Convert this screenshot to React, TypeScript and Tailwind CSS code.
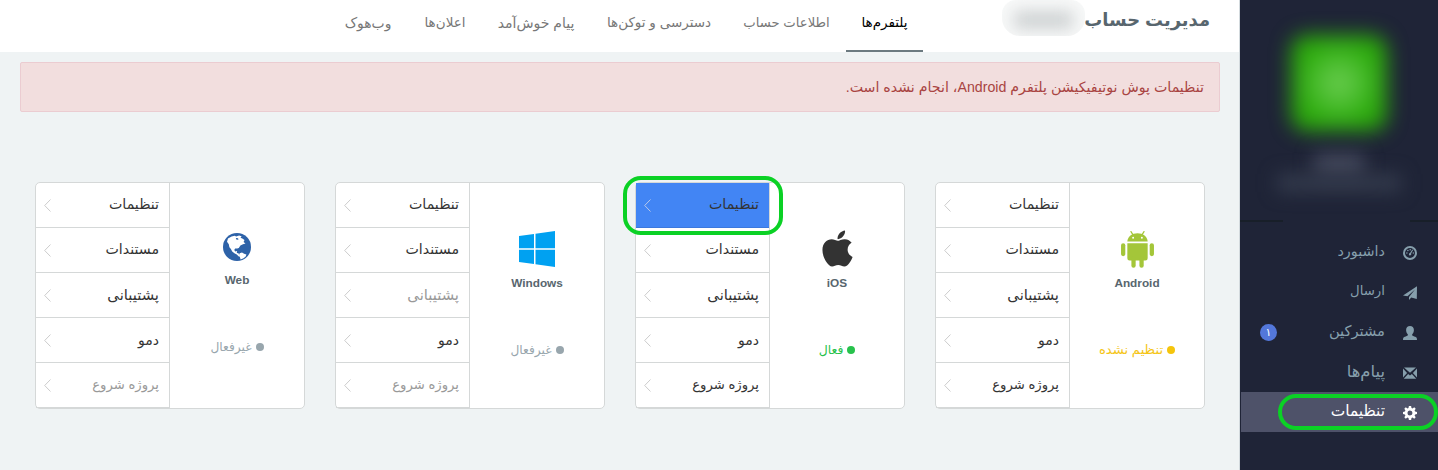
import type { ReactNode } from 'react';
import { FaApple } from 'react-icons/fa';

const tabs = [
  { label: 'پلتفرم‌ها', cls: 'w-[77px] text-[13.5px] border-[#6c7a80] text-black' },
  { label: 'اطلاعات حساب', cls: 'w-[119px] text-[13.2px] border-transparent text-[#777]' },
  { label: 'دسترسی و توکن‌ها', cls: 'w-[136px] text-[13.5px] border-transparent text-[#777]' },
  { label: 'پیام خوش‌آمد', cls: 'w-[110px] text-[14px] border-transparent text-[#777]' },
  { label: 'اعلان‌ها', cls: 'w-[72px] text-[13.5px] border-transparent text-[#777]' },
  { label: 'وب‌هوک', cls: 'w-[82px] text-[13.9px] border-transparent text-[#777]' },
];

const rows = [
  { label: 'تنظیمات', size: 'text-[14.2px]' },
  { label: 'مستندات', size: 'text-[14.2px]' },
  { label: 'پشتیبانی', size: 'text-[14.8px]' },
  { label: 'دمو', size: 'text-[14px]' },
  { label: 'پروژه شروع', size: 'text-[13.2px]' },
];

function AndroidIcon() {
  return (
    <svg width="33" height="37" viewBox="0 0 32.4 36.4" fill="#a4c639">
      <rect x="0" y="12" width="4.2" height="12.8" rx="2.1" />
      <rect x="28.2" y="12" width="4.2" height="12.8" rx="2.1" />
      <path d="M6.2 12.1h20v14.7a2.2 2.2 0 0 1-2.2 2.2H8.4a2.2 2.2 0 0 1-2.2-2.2z" />
      <rect x="10.2" y="25" width="4.2" height="11.2" rx="2.1" />
      <rect x="18.1" y="25" width="4.2" height="11.2" rx="2.1" />
      <path d="M6.2 10.4C6.4 5.6 10.8 2.3 16.2 2.3s9.8 3.3 10 8.1z" />
      <path d="M9.8 .6l2 3.2M22.6 .6l-2 3.2" stroke="#a4c639" strokeWidth="1.2" strokeLinecap="round" />
      <circle cx="11.9" cy="6.6" r=".95" fill="#fff" />
      <circle cx="20.5" cy="6.6" r=".95" fill="#fff" />
    </svg>
  );
}

function WindowsIcon() {
  return (
    <svg width="36" height="36" viewBox="0 0 36 36" fill="#00a1f1">
      <path d="M0 5.1l15-2.1v14.2H0zM16.5 2.8L36 0v17.2H16.5zM0 18.8h15V33L0 30.9zM16.5 18.8H36V36l-19.5-2.8z" />
    </svg>
  );
}

function GlobeIcon() {
  return (
    <svg width="28" height="28" viewBox="0 0 28 28">
      <circle cx="14" cy="14" r="14" fill="#2d62a8" />
      <path
        fill="#fff"
        d="M5 5.4L8.6 3.6l3.2-.9 1.3.9 3-1 2.5.7-1.1 1.5 1.8.8 2.2 1.4-.9 1.9 1.9 1.6-2.500.8-2.600 1.300-1.600 2.300-1.600.7-2.100-.2-.8 1.700.9 1.500 1.900-.7-.3 2 1.700.4.700 2 .9 1.200-1.300-.1-2-2-2.400-1.100-2.200-1.700-1.300-2.600-1.500-1.800-.6-3L4 8.700z"
      />
      <path fill="#fff" d="M16.700 20.200l2.300-.6 2.100 1.100 2.300.9-.7 2-2.200 1.600-2.900 1.400-.7-2.700-1-1.700z" />
      <path fill="#2d62a8" d="M13.200 4.900l1.800.3.500 1.200-1.500.4-1.200-.8z" />
    </svg>
  );
}

type Platform = {
  name: string;
  icon: ReactNode;
  iconBox: string;
  status: string;
  statusCls: string;
  dotCls: string;
  disabled: number[];
  highlighted?: boolean;
};

const platforms: Platform[] = [
  { name: 'Android', icon: <AndroidIcon />, iconBox: 'mt-12 mb-2 h-9', status: 'تنظیم نشده', statusCls: 'text-[#f5c518] text-[13.2px]', dotCls: 'bg-[#f5c50c]', disabled: [] },
  { name: 'iOS', icon: <FaApple size={41} color="#333" />, iconBox: 'mt-[47px] mb-[9px] h-9', status: 'فعال', statusCls: 'text-[#27c24c] text-[12.4px]', dotCls: 'bg-[#27c24c]', disabled: [], highlighted: true },
  { name: 'Windows', icon: <WindowsIcon />, iconBox: 'mt-12 mb-2 h-9', status: 'غیرفعال', statusCls: 'text-[#98a6ad] text-[12.2px]', dotCls: 'bg-[#98a6ad]', disabled: [2, 4] },
  { name: 'Web', icon: <GlobeIcon />, iconBox: 'mt-[50px] mb-[11px] h-7', status: 'غیرفعال', statusCls: 'text-[#98a6ad] text-[12.2px]', dotCls: 'bg-[#98a6ad]', disabled: [4] },
];

function PlatformCard({ p }: { p: Platform }) {
  return (
    <section className="relative flex h-[227px] w-[270px] rounded-[5px] border border-[#d5d8d8] bg-white">
      <div className="flex flex-1 flex-col items-center">
        <div className={`flex items-center justify-center ${p.iconBox}`}>{p.icon}</div>
        <div dir="ltr" className="text-[11.8px] leading-4 font-bold text-[#58666e]">{p.name}</div>
        <div className={`mt-[49px] flex h-5 items-center gap-1 leading-5 ${p.statusCls}`}>
          <span className={`size-2 rounded-full ${p.dotCls}`} />
          <span>{p.status}</span>
        </div>
      </div>
      <ul className="w-[134px] border-r border-[#d5d8d8]">
        {rows.map((row, i) => {
          const active = p.highlighted && i === 0;
          return (
            <li
              key={row.label}
              className={`flex h-[45px] items-center justify-between border-b pr-[10px] pl-2 ${active ? 'border-[#3b78de] bg-[#4285f4]' : 'border-[#d5d8d8]'} ${p.disabled.includes(i) ? 'text-[#999]' : 'text-[#333]'}`}
            >
              <span className={row.size}>{row.label}</span>
              <svg width="7" height="13" viewBox="0 0 7 13" fill="none" stroke={active ? '#b9c9ea' : '#ccc'}>
                <path d="M6.5 .5L.7 6.5l5.8 6" />
              </svg>
            </li>
          );
        })}
      </ul>
      {p.highlighted && (
        <div className="absolute -top-[7px] -left-[13px] h-[59px] w-[160px] rounded-[18px] border-4 border-[#0bd125]" />
      )}
    </section>
  );
}

const glyphs = {
  dashboard: (
    <>
      <circle cx="7" cy="7" r="6" fill="none" stroke="currentColor" strokeWidth="2" />
      <circle cx="3.9" cy="7" r=".75" />
      <circle cx="4.9" cy="4.6" r=".75" />
      <circle cx="7.2" cy="3.7" r=".75" />
      <circle cx="10.3" cy="7" r=".75" />
      <path d="M9.3 3.5l.8.5-2 3.6a1.2 1.2 0 1 1-1.1-.6z" />
    </>
  ),
  send: <path d="M14 .2L0 9.6l4.5.7L12 3.6 6 10.900v3.100l2.200-2.500 5.600 1.500z" />,
  user: <path d="M7 0c2.3 0 3.9 1.5 3.9 3.9 0 1.9-.7 3.5-1.7 4.400v1c.4.7 1.600 1 3 1.500 1.400.6 1.800 1.200 1.800 3.200H0c0-2 .4-2.600 1.800-3.200 1.400-.5 2.600-.8 3-1.500v-1C3.800 7.400 3.100 5.800 3.100 3.900 3.100 1.500 4.700 0 7 0z" />,
  envelope: <path d="M1 1.5h12L7 6.8zM0 2.6l4.1 4.5L0 11.4zM14 2.6v8.8L9.9 7.1zM5.1 7.9L7 9.5l1.900-1.600 4.300 4.900H.8z" />,
  cog: (
    <path
      fillRule="evenodd"
      d="M5.9 0h2.2l.4 1.9 1.1.5L11.2 1.3l1.5 1.5-1.1 1.6.5 1.1 1.9.4v2.200l-1.900.4-.5 1.100 1.100 1.600-1.500 1.500-1.600-1.100-1.100.5L8.100 14H5.900l-.4-1.900-1.100-.5-1.600 1.100-1.500-1.500 1.100-1.600-.5-1.100L0 8.100V5.900l1.900-.4.5-1.100L1.300 2.800l1.500-1.500 1.600 1.100 1.100-.5zM7 4.500a2.500 2.500 0 1 0 0 5 2.500 2.500 0 0 0 0-5z"
    />
  ),
};

const menu: { label: string; glyph: keyof typeof glyphs; size: string; badge?: string }[] = [
  { label: 'داشبورد', glyph: 'dashboard', size: 'text-[14.4px]' },
  { label: 'ارسال', glyph: 'send', size: 'text-[13.3px]' },
  { label: 'مشترکین', glyph: 'user', size: 'text-[14.7px]', badge: '۱' },
  { label: 'پیام‌ها', glyph: 'envelope', size: 'text-[16.4px]' },
  { label: 'تنظیمات', glyph: 'cog', size: 'text-[15.4px]' },
];

function Sidebar() {
  return (
    <aside className="flex w-[198px] flex-col overflow-hidden border-r-0 border-l-0 bg-[#1f2437]">
      <div className="flex h-[220px] flex-col items-center pt-[35px]">
        <div className="size-24 rounded-[16px] bg-[radial-gradient(circle_at_center,#6fd055_0%,#44b928_38%,#2aa80a_66%)] blur-[10px]" />
        <div className="mt-[22px] h-[24px] w-[50px] bg-[#42475a] blur-[9px]" />
        <div className="-mt-[3px] h-[18px] w-[124px] bg-[#333a4c] blur-[9px]" />
      </div>
      <div className="flex h-3 justify-between">
        <span className="h-[2px] w-[28px] bg-[#181f29]" />
        <span className="h-[2px] w-[43px] bg-[#181f29]" />
      </div>
      <nav>
        {menu.map((item) => {
          const active = item.glyph === 'cog';
          return (
            <div
              key={item.label}
              className={`relative ml-px flex h-10 items-center pr-[21px] ${active ? 'bg-[#4e5269] text-white' : 'text-[#869fac]'}`}
            >
              <svg className="mt-px" width="14" height="14" viewBox="0 0 14 14" fill="currentColor">
                {glyphs[item.glyph]}
              </svg>
              <span className={`mr-[18px] -mt-[2px] leading-6 ${item.size}`}>{item.label}</span>
              {item.badge && (
                <span className="mr-auto ml-[19px] flex size-[17px] items-center justify-center rounded-full bg-[#5377da] pt-px text-[11px] text-white">
                  {item.badge}
                </span>
              )}
              {active && (
                <span className="absolute top-[2px] right-0 h-9 w-[160px] rounded-[18px] border-4 border-[#0bd125]" />
              )}
            </div>
          );
        })}
      </nav>
    </aside>
  );
}

export default function App() {
  return (
    <div dir="rtl" className="flex h-[470px] w-[1438px] overflow-hidden bg-[#eff3f4] font-['Liberation_Sans','DejaVu_Sans',sans-serif]">
      <Sidebar />
      <main className="w-[1240px] border-r border-[#d3dade]">
        <header className="flex h-[52px] bg-white pr-[29px]">
          <h1 className="w-[125px] text-[17.9px] leading-[41px] font-bold whitespace-nowrap text-[#58666e]">مدیریت حساب</h1>
          <div className="h-9 w-[83px] overflow-hidden rounded-t-[14px] rounded-b-[18px] bg-[#f8f9f9] px-3 pt-[11px]">
            <div className="h-[18px] bg-[#cdd1d2] blur-[8px]" />
          </div>
          <nav className="mr-[79px] flex">
            {tabs.map((t) => (
              <a key={t.label} className={`h-[52px] border-b-2 text-center leading-[46px] whitespace-nowrap ${t.cls}`}>
                {t.label}
              </a>
            ))}
          </nav>
        </header>
        <div className="mt-[10px] mr-[19px] h-[50px] w-[1200px] rounded-[2px] border border-[#ebccd1] bg-[#f2dede] pr-[15px] text-[14.2px] leading-[48px] text-[#a94442]">
          تنظیمات پوش نوتیفیکیشن پلتفرم Android، انجام نشده است.
        </div>
        <div className="mt-[70px] mr-[34px] flex gap-[30px]">
          {platforms.map((p) => (
            <PlatformCard key={p.name} p={p} />
          ))}
        </div>
      </main>
    </div>
  );
}
